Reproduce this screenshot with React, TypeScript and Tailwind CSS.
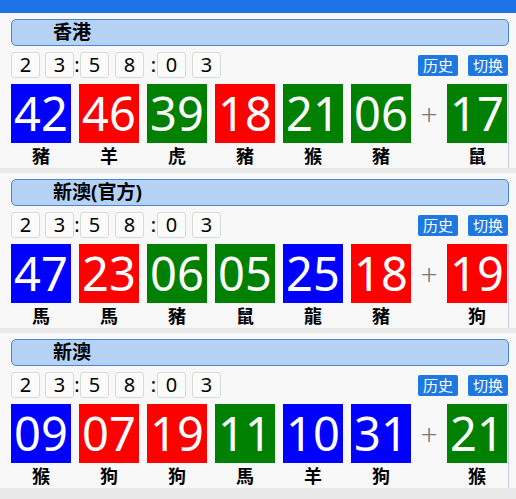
import React from "react";

type Ball = { n: string; zodiac: string; color: "blue" | "red" | "green" };

type Draw = { title: string; balls: Ball[] };

const colorClass: Record<Ball["color"], string> = {
  blue: "bg-[#0000ff]",
  red: "bg-[#ff0000]",
  green: "bg-[#008000]",
};

const draws: Draw[] = [
  {
    title: "香港",
    balls: [
      { n: "42", zodiac: "豬", color: "blue" },
      { n: "46", zodiac: "羊", color: "red" },
      { n: "39", zodiac: "虎", color: "green" },
      { n: "18", zodiac: "豬", color: "red" },
      { n: "21", zodiac: "猴", color: "green" },
      { n: "06", zodiac: "豬", color: "green" },
      { n: "17", zodiac: "鼠", color: "green" },
    ],
  },
  {
    title: "新澳(官方)",
    balls: [
      { n: "47", zodiac: "馬", color: "blue" },
      { n: "23", zodiac: "馬", color: "red" },
      { n: "06", zodiac: "豬", color: "green" },
      { n: "05", zodiac: "鼠", color: "green" },
      { n: "25", zodiac: "龍", color: "blue" },
      { n: "18", zodiac: "豬", color: "red" },
      { n: "19", zodiac: "狗", color: "red" },
    ],
  },
  {
    title: "新澳",
    balls: [
      { n: "09", zodiac: "猴", color: "blue" },
      { n: "07", zodiac: "狗", color: "red" },
      { n: "19", zodiac: "狗", color: "red" },
      { n: "11", zodiac: "馬", color: "green" },
      { n: "10", zodiac: "羊", color: "blue" },
      { n: "31", zodiac: "狗", color: "blue" },
      { n: "21", zodiac: "猴", color: "green" },
    ],
  },
];

const cjk = "font-['Noto_Sans','Noto_Sans_CJK_TC',sans-serif]";

function Digit({ d }: { d: string }) {
  return (
    <div className="flex h-[26px] w-[29px] items-center justify-center rounded-[3px] border border-[#d9d9d9] bg-[#fbfbfb] text-[20px] text-black">
      {d}
    </div>
  );
}

function Colon({ className }: { className: string }) {
  return <div className={`flex h-[26px] items-center text-[20px] text-black ${className}`}>:</div>;
}

function BallCell({ ball }: { ball: Ball }) {
  return (
    <div className="flex w-[60px] flex-col items-center">
      <div
        className={`flex h-[59px] w-[60px] items-center justify-center text-[47px] leading-none text-white ${colorClass[ball.color]}`}
      >
        {ball.n}
      </div>
      <div className="flex h-[25px] items-center text-[18px] font-bold leading-none text-black">
        {ball.zodiac}
      </div>
    </div>
  );
}

function DrawCard({ draw }: { draw: Draw }) {
  const main = draw.balls.slice(0, 6);
  const special = draw.balls[6];
  return (
    <section className="flex h-[155px] flex-col bg-[#f8f8f8] pl-[11px] pr-[7px] pt-[6px]">
      <div className="flex h-[27px] items-center rounded-[5px] border border-[#4a86d8] bg-[#b5d1f3] pl-[41px] text-[19px] font-bold text-black">
        {draw.title}
      </div>
      <div className="mt-[6px] flex h-[26px] items-center">
        <Digit d="2" />
        <div className="w-[5px]" />
        <Digit d="3" />
        <Colon className="w-[6px] justify-center" />
        <Digit d="5" />
        <div className="w-[6px]" />
        <Digit d="8" />
        <Colon className="w-[13px] justify-end pr-[1px]" />
        <Digit d="0" />
        <div className="w-[6px]" />
        <Digit d="3" />
        <div className="ml-auto flex gap-[10px] pr-[1px] font-['Noto_Sans','Noto_Sans_CJK_SC',sans-serif]">
          <button className="h-[21px] w-[40px] rounded-[2px] bg-[#1f78e0] text-[15px] leading-none text-white">
            历史
          </button>
          <button className="h-[21px] w-[40px] rounded-[2px] bg-[#1f78e0] text-[15px] leading-none text-white">
            切换
          </button>
        </div>
      </div>
      <div className="mt-[6px] flex border-r border-[#c9c6f0]">
        <div className="flex gap-[8px]">
          {main.map((b, i) => (
            <BallCell key={i} ball={b} />
          ))}
        </div>
        <div className="flex h-[59px] w-[36px] items-center justify-center text-[30px] font-light text-[#777]">
          +
        </div>
        <BallCell ball={special} />
      </div>
    </section>
  );
}

export default function App() {
  return (
    <div className={`min-h-[499px] w-[516px] bg-[#e9e9e9] ${cjk}`}>
      <div className="h-[13px] bg-[#1e74e6]" />
      <div className="flex flex-col gap-[5px]">
        {draws.map((d, i) => (
          <DrawCard key={i} draw={d} />
        ))}
      </div>
    </div>
  );
}
